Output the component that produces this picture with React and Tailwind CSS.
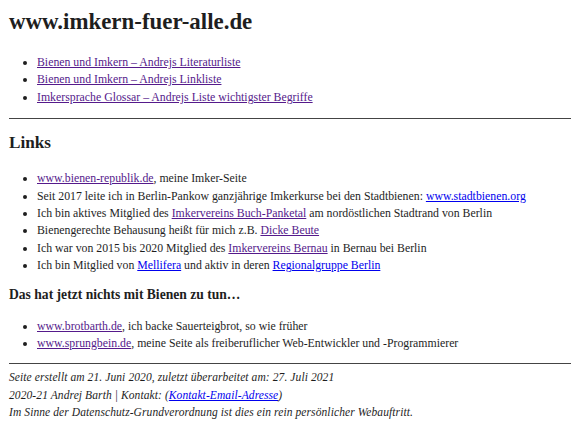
import React from 'react';

const Visited = ({ children }) => (
  <a href="#" className="text-[#551a8b] underline">{children}</a>
);

const Fresh = ({ children }) => (
  <a href="#" className="text-[#0000ee] underline">{children}</a>
);

const App = () => {
  return (
    <div className="bg-white min-h-[430px] px-[9px] pt-[8px] text-[#1e1e1e] text-[11.8px] leading-[17.4px] font-['Liberation_Serif',serif]">
      <h1 className="text-[22.9px] leading-[28px] font-bold">www.imkern-fuer-alle.de</h1>

      <ul className="list-disc pl-[28px] mt-[18px]">
        <li><Visited>Bienen und Imkern – Andrejs Literaturliste</Visited></li>
        <li><Visited>Bienen und Imkern – Andrejs Linkliste</Visited></li>
        <li><Visited>Imkersprache Glossar – Andrejs Liste wichtigster Begriffe</Visited></li>
      </ul>

      <hr className="mt-[12px] border-t-[1.5px] border-[#444]" />

      <h2 className="text-[17.2px] leading-[22px] font-bold mt-[13px]">Links</h2>

      <ul className="list-disc pl-[28px] mt-[16px]">
        <li><Visited>www.bienen-republik.de</Visited>, meine Imker-Seite</li>
        <li>Seit 2017 leite ich in Berlin-Pankow ganzjährige Imkerkurse bei den Stadtbienen: <Fresh>www.stadtbienen.org</Fresh></li>
        <li>Ich bin aktives Mitglied des <Visited>Imkervereins Buch-Panketal</Visited> am nordöstlichen Stadtrand von Berlin</li>
        <li>Bienengerechte Behausung heißt für mich z.B. <Visited>Dicke Beute</Visited></li>
        <li>Ich war von 2015 bis 2020 Mitglied des <Visited>Imkervereins Bernau</Visited> in Bernau bei Berlin</li>
        <li>Ich bin Mitglied von <Fresh>Mellifera</Fresh> und aktiv in deren <Fresh>Regionalgruppe Berlin</Fresh></li>
      </ul>

      <h3 className="text-[13.6px] leading-[18px] font-bold mt-[11px]">Das hat jetzt nichts mit Bienen zu tun…</h3>

      <ul className="list-disc pl-[28px] mt-[14px]">
        <li><Visited>www.brotbarth.de</Visited>, ich backe Sauerteigbrot, so wie früher</li>
        <li><Visited>www.sprungbein.de</Visited>, meine Seite als freiberuflicher Web-Entwickler und -Programmierer</li>
      </ul>

      <hr className="mt-[11px] border-t-[1.5px] border-[#444]" />

      <div className="italic text-[11.5px] tracking-[0.008em] mt-[5px]">
        <p>Seite erstellt am 21. Juni 2020, zuletzt überarbeitet am: 27. Juli 2021</p>
        <p>2020-21 Andrej Barth | Kontakt: (<Fresh>Kontakt-Email-Adresse</Fresh>)</p>
        <p>Im Sinne der Datenschutz-Grundverordnung ist dies ein rein persönlicher Webauftritt.</p>
      </div>
    </div>
  );
};

export default App;
